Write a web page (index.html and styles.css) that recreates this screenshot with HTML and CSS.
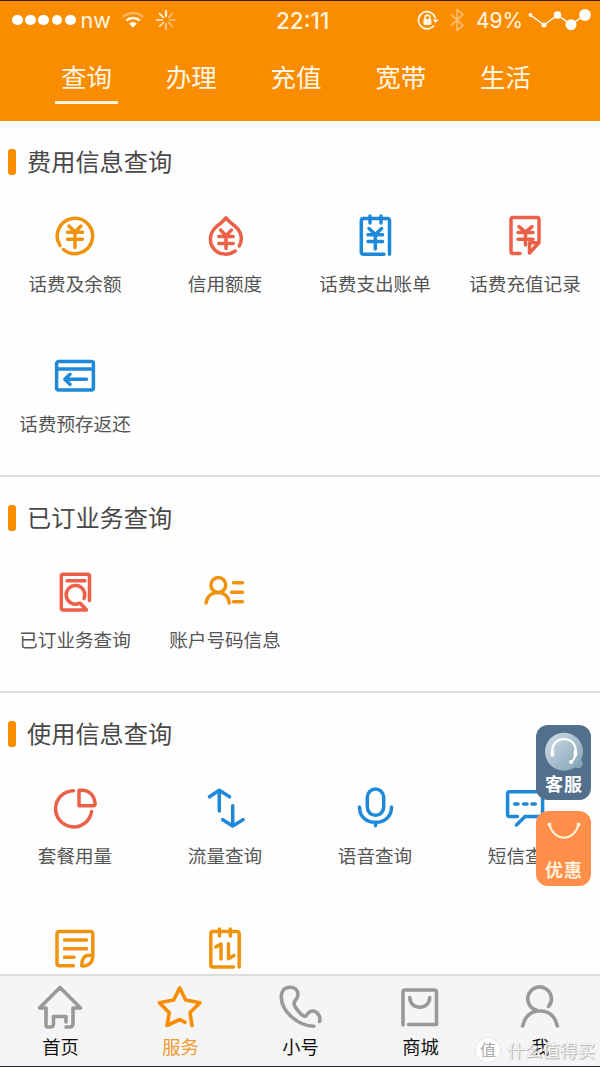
FILE: index.html
```html
<!DOCTYPE html>
<html lang="zh-CN">
<head>
<meta charset="utf-8">
<title>服务</title>
<link rel="stylesheet" href="styles.css">
</head>
<body>
<div class="app">
  <header class="header">
    <div class="status">
      <div class="status-left">
        <span class="signal"><i></i><i></i><i></i><i></i><i></i></span>
        <span class="carrier">nw</span>
        <svg class="wifi" viewBox="0 0 22 18" width="22" height="18"><path class="dim" d="M1 6.200A14.200 14.200 0 0 1 21 6.200"/><path d="M4.300 9.600A9.600 9.600 0 0 1 17.700 9.600"/><path class="dot" d="M7.200 12.600A5.400 5.400 0 0 1 14.800 12.600L11 16.800Z"/></svg>
        <svg class="spinner" viewBox="0 0 20 20" width="20" height="20"><path d="M10 1V6.200"/><path opacity=".45" d="M16.400 3.600L12.700 7.300"/><path opacity=".4" d="M19 10H13.800"/><path opacity=".45" d="M16.400 16.400L12.700 12.700"/><path opacity=".55" d="M10 19V13.800"/><path opacity=".65" d="M3.600 16.400L7.300 12.700"/><path opacity=".75" d="M1 10H6.200"/><path opacity=".9" d="M3.600 3.600L7.300 7.300"/></svg>
      </div>
      <div class="clock">22:11</div>
      <div class="status-right">
        <svg class="lock" viewBox="0 0 22 20" width="22" height="20"><path d="M16.500 16A8.600 8.600 0 1 1 18.400 8"/><path class="solid" d="M15.500 9.500H22L18.700 13Z"/><rect class="solid" x="6.400" y="9" width="8" height="6" rx="1"/><path d="M8 9V7.600A2.300 2.300 0 0 1 12.800 7.600V9"/></svg>
        <svg class="bluetooth" viewBox="0 0 14 24" width="14" height="24"><path d="M1 6.500L13 17.500L7 22.500V1.500L13 6.500L1 17.500"/></svg>
        <span class="percent">49%</span>
        <svg class="battery" viewBox="0 0 64 24" width="64" height="24"><path d="M2.500 7L16 17L29.500 7L43 16.700L57 7"/><circle cx="2.500" cy="7" r="1.900"/><circle cx="16" cy="17" r="2.500"/><circle cx="29.500" cy="7" r="3.700"/><circle cx="43" cy="16.700" r="5.500"/><circle cx="57" cy="7" r="5.900"/></svg>
      </div>
    </div>
    <nav class="tabs">
      <a class="tab active">查询</a><a class="tab">办理</a><a class="tab">充值</a><a class="tab">宽带</a><a class="tab">生活</a>
    </nav>
  </header>

  <main class="content">
    <section class="section">
      <h2 class="title"><span>费用信息查询</span></h2>
      <div class="grid">
        <div class="item"><svg class="icon orange" viewBox="0 0 44 44"><path d="M7 31.500A17.700 17.700 0 1 1 10.500 35.500"/><path d="M16 12L22 18L28 12M14.500 18.200H29.500M14.500 25.300H29.500M22 18V33.500"/></svg><span>话费及余额</span></div>
        <div class="item"><svg class="icon red" viewBox="0 0 44 44"><path d="M36.300 32C40 25.500 38.500 18 32.500 12.500Q26 7.500 23 3.800Q20 7.500 13.500 12.500C5.500 19.500 6 30 11.500 35.500C17 41.300 26 41.500 32.300 37"/><path d="M17.600 16L23 21.800L28.400 16M15.800 22.500H30.200M15.800 29.500H30.200M23 22V34.500"/></svg><span>信用额度</span></div>
        <div class="item"><svg class="icon blue" viewBox="0 0 44 44"><path d="M16.500 4.500H10.500Q8.300 4.500 8.300 6.700V38Q8.300 40.200 10.500 40.200H31M28.500 4.500H34.300Q36.500 4.500 36.500 6.700V40.200M18 4.500H27M17 2V9M28 2V9"/><path d="M16 14.500L22.300 20.500L28.600 14.500M15 20.800H29.600M15 27.500H29.600M22.300 20.500V35"/></svg><span>话费支出账单</span></div>
        <div class="item"><svg class="icon red" viewBox="0 0 44 44"><path d="M17 39.500H10Q8 39.500 8 37.500V5.500Q8 3.500 10 3.500H34Q36 3.500 36 5.500V28.500L26.500 39V28.800H36"/><path d="M16 12.600L22.500 18.200L29 12.600M15 18.500H30M15 25.200H30M22.500 18V31"/></svg><span>话费充值记录</span></div>
        <div class="item"><svg class="icon blue" viewBox="0 0 44 44"><rect x="3.600" y="7.600" width="36.800" height="28.400" rx="2"/><path d="M4 15H40M12 25.300H33.500M17 20.300L11.800 25.300L17 30.300"/></svg><span>话费预存返还</span></div>
      </div>
    </section>

    <section class="section">
      <h2 class="title"><span>已订业务查询</span></h2>
      <div class="grid">
        <div class="item"><svg class="icon red" viewBox="0 0 44 44"><path d="M36.500 30.500V6.300Q36.500 4.300 34.500 4.300H10.300Q8.300 4.300 8.300 6.300V38Q8.300 40 10.300 40H33.500L27.500 33.500M14 10.700H32"/><path d="M31 28.500A9.300 9.300 0 1 0 26.500 33.200"/></svg><span>已订业务查询</span></div>
        <div class="item"><svg class="icon orange" viewBox="0 0 44 44"><circle cx="15.300" cy="15" r="7.400"/><path d="M3 33C4 26.200 9 22.600 15 22.600S25.500 26.200 26.300 33M30.500 12.700H39.500M28.500 22.300H39.500M30.500 31.700H39.500"/></svg><span>账户号码信息</span></div>
      </div>
    </section>

    <section class="section">
      <h2 class="title"><span>使用信息查询</span></h2>
      <div class="grid">
        <div class="item"><svg class="icon red" viewBox="0 0 44 44"><path d="M20.500 4.700A18.100 18.100 0 1 0 38.600 25.500"/><path d="M26 4.200V19.800H40.500Q42.200 19.800 42 17.500C41.500 9.500 36 4.200 29 4.200Z"/></svg><span>套餐用量</span></div>
        <div class="item"><svg class="icon blue" viewBox="0 0 44 44"><path d="M16.300 25V4.300M6.500 10.800L16.300 4.300L26.500 10.800M29.700 19.700V40M19.700 33.700L29.700 40L40 33.700"/></svg><span>流量查询</span></div>
        <div class="item"><svg class="icon blue" viewBox="0 0 44 44"><rect x="14.300" y="3" width="16.400" height="26.300" rx="8.200"/><path d="M6.500 21C6.500 30.500 13 36.300 22.500 36.300S38.500 30.500 38.500 21M22.500 36.300V39.700"/></svg><span>语音查询</span></div>
        <div class="item"><svg class="icon blue" viewBox="0 0 44 44"><path d="M14.500 30.500H6.600Q4.600 30.500 4.600 28.500V7.800Q4.600 5.800 6.600 5.800H37.600Q39.600 5.800 39.600 7.800V28.500Q39.600 30.500 37.600 30.500H22L13.500 39"/><path d="M11.700 18H15M20.500 18H24M29 18H32.300"/></svg><span>短信查询</span></div>
        <div class="item"><svg class="icon orange" viewBox="0 0 44 44"><path d="M20.500 39.800H6.500Q4 39.800 4 37.300V8Q4 5.500 6.500 5.500H37.300Q39.800 5.500 39.800 8V30Q39.800 36 35.500 38.500Q32.500 40.300 28.800 39.800Q28.500 35 30.500 32Q33 28.500 39.500 29.500M11.500 14H33.500M11.500 22.800H33.500M11.500 31.300H21"/></svg></div>
        <div class="item"><svg class="icon orange" viewBox="0 0 44 44"><path d="M16 5.500H10Q7.800 5.500 7.800 7.700V38.700Q7.800 40.900 10 40.900H30.500M27 5.500H34Q36.200 5.500 36.200 7.700V40.900M17 5.500H26M16.500 3V10M27.300 3V10M12.800 21L18 18V33M25.500 17.800V32.800L31 29.500"/></svg></div>
      </div>
    </section>
  </main>

  <footer class="tabbar">
    <div class="nav"><svg viewBox="0 0 48 48"><path d="M30 39V33.500H17.500V41Q17.500 44 14.500 44H12Q10 44 10 42V25H3.500L24 4.500L44.500 25H37V40Q37 44 34 44H30"/></svg><span>首页</span></div>
    <div class="nav active"><svg viewBox="0 0 48 48"><path d="M36 42.500L34 29.500L44 19.700L29.700 17L23.700 5L17.700 17L3.300 19.700L13.300 29.700L11 42.500L23.700 36.500L29 39.300"/></svg><span>服务</span></div>
    <div class="nav"><svg viewBox="0 0 48 48"><path d="M43.500 38.500C45 33 41 28 36.500 28C31 28 31.500 34 28.500 33.300C25 32.500 18 23.500 18 20C18 17.500 22 16.500 22 11.500C22 7 18.500 4.200 14 4.200C8 4.200 5.300 8.500 5.300 14C5.300 28 21.500 43 38 43.300"/></svg><span>小号</span></div>
    <div class="nav"><svg viewBox="0 0 48 48"><path d="M7 42V9Q7 7 9 7H38.500Q40.500 7 40.500 9V41.500H12.500M13.800 14.500C14 27.700 33.500 27.700 33.700 14.500"/></svg><span>商城</span></div>
    <div class="nav"><svg viewBox="0 0 48 48"><path d="M20 27A11.800 11.800 0 1 1 32.500 23.500M6.700 43C9 32.500 15.500 28 24 28S39 32.500 41.300 43"/></svg><span>我</span></div>
  </footer>

  <aside class="floats">
    <div class="float service"><svg viewBox="0 0 44 44" width="44" height="44"><defs><linearGradient id="bubble" x1="0" y1="0" x2="1" y2="1"><stop offset="0" stop-color="#d4dfe7"/><stop offset="1" stop-color="#7fa0b4"/></linearGradient></defs><circle class="fill" cx="36" cy="33.500" r="4.800" fill="#85a5b9"/><circle class="fill" cx="22" cy="21.800" r="19" fill="url(#bubble)"/><path class="band" d="M10.500 23C8 4.500 36 4.500 33.500 23Q33 29 29.500 31.500"/><path class="ear" d="M10.500 21.500V25M33.500 21.500V25"/><circle class="fill" cx="29" cy="32" r="2" fill="#fff"/></svg><span>客服</span></div>
    <div class="float deal"><svg viewBox="0 0 44 44" width="44" height="44"><path class="handle" d="M7.500 9C12.500 26 31.500 26 36.500 9"/><circle class="fill" cx="7.500" cy="8.500" r="2" fill="#fff1dc"/><circle class="fill" cx="36.500" cy="8.500" r="2" fill="#fff1dc"/></svg><span>优惠</span></div>
  </aside>
  <div class="watermark"><b>值</b><span>什么值得买</span></div>
</div>
</body>
</html>
```
FILE: styles.css
```css
* { box-sizing: border-box; }
body { margin: 0; font-family: "Noto Sans CJK SC", sans-serif; }
svg { fill: none; stroke: currentColor; stroke-linecap: round; stroke-linejoin: round; flex: none; }
.app { position: relative; width: 600px; height: 1067px; display: flex; flex-direction: column; overflow: hidden; background: #fefefe; border-bottom: 1px solid #28282d; }

.header { flex: none; height: 121px; background: #fa8c00; border-top: 1px solid #4a1a08; color: #fff6e6; }
.status { height: 38px; display: grid; grid-template-columns: 276px 1fr 183px; align-items: center; font-family: Inter, sans-serif; }
.status-left, .status-right { display: flex; align-items: center; }
.status-left { padding-left: 12px; }
.signal { display: flex; gap: 2.4px; }
.signal i { width: 10.800px; height: 10.800px; border-radius: 50%; background: #fff; }
.carrier { margin-left: 5px; font-size: 21.500px; font-weight: 400; line-height: 24px; width: 34px; }
.wifi { margin-left: 7px; stroke-width: 2.500; stroke-linecap: butt; }
.wifi .dim { opacity: .4; }
.wifi .dot { fill: #fff; stroke: none; }
.spinner { margin-left: 12px; stroke-width: 2; }
.clock { font-size: 22.500px; font-weight: 500; color: #fff3df; }
.lock { stroke-width: 1.700; }
.lock .solid { fill: #fff6e6; stroke: none; }
.bluetooth { margin-left: 11px; stroke-width: 1.700; opacity: .45; }
.percent { margin-left: 12px; width: 47px; font-size: 21px; font-weight: 400; }
.battery { margin-left: 5px; stroke-width: 1.500; color: #fff; }
.battery circle { fill: #fff; stroke: none; }

.tabs { display: flex; padding-left: 34px; }
.tab { width: 104.800px; height: 66px; display: flex; flex-direction: column; align-items: center; padding-top: 18px; font-size: 25.500px; line-height: 38px; }
.tab.active::after { content: ""; flex: none; width: 63px; height: 3px; margin-top: 6px; background: #fff3dc; }

.content { flex: 1; min-height: 0; overflow: hidden; }
.section { border-bottom: 2px solid #dedede; }
.title { display: flex; align-items: center; gap: 11px; height: 82px; margin: 0; padding-left: 8px; font-size: 24.200px; font-weight: 400; color: #484848; }
.title span { padding-bottom: 3px; }
.title::before { content: ""; width: 8px; height: 26px; border-radius: 3px; background: #fa8c00; }
.grid { display: grid; grid-template-columns: repeat(4, 150px); row-gap: 8px; }
.item { height: 132px; padding-top: 11px; display: flex; flex-direction: column; align-items: center; gap: 13px; font-size: 18.600px; line-height: 23px; color: #555; }
.icon { width: 44px; height: 44px; stroke-width: 3.500; }
.orange { color: #ef930f; }
.red { color: #eb6049; }
.blue { color: #1e89d8; }

.tabbar { flex: none; height: 92px; display: grid; grid-template-columns: repeat(5, 120px); background: #f5f5f5; border-top: 2px solid #dcdcdc; }
.nav { padding-top: 7px; display: flex; flex-direction: column; align-items: center; gap: 3px; font-size: 18.300px; line-height: 24px; color: #111; }
.nav svg { width: 48px; height: 48px; stroke-width: 3.600; color: #999; }
.nav span { padding-left: 1px; }
.nav.active { color: #f09a30; }
.nav.active svg { color: #fa8c00; }

.floats { position: absolute; left: 536px; top: 725px; display: flex; flex-direction: column; gap: 11px; }
.float { width: 55px; height: 75px; border-radius: 12px; display: flex; flex-direction: column; align-items: center; padding-top: 5px; color: #fff; font-size: 18px; font-weight: 700; line-height: 22px; letter-spacing: 1px; }
.service { background: #526f8b; }
.deal { background: #ff8f4a; color: #fff1dc; }
.float span { margin-top: -2px; padding-left: 1px; }
.float .fill { stroke: none; }
.band { stroke: #fff; stroke-width: 2.200; }
.ear { stroke: #fff; stroke-width: 3.600; }
.handle { stroke: #fff1dc; stroke-width: 2; }

.watermark { position: absolute; left: 476px; top: 1037px; display: flex; align-items: center; gap: 7px; font-size: 17.600px; line-height: 26px; color: #f8f8f8; text-shadow: 1px 1px 1px #aaa, 0 0 1px #bbb; white-space: nowrap; }
.watermark b { width: 24px; height: 24px; border-radius: 50%; background: #fff; color: #aaa; text-align: center; line-height: 23px; font-size: 16px; font-weight: 400; text-shadow: none; box-shadow: 0 0 2px #ccc; }
```
